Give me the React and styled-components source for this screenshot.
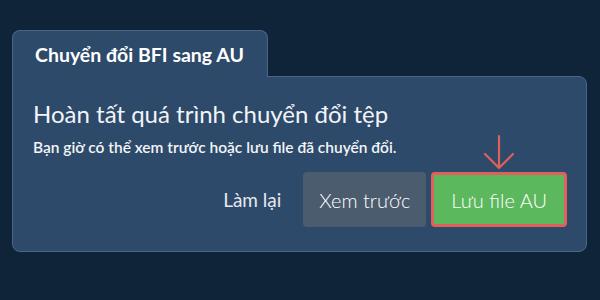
import React from "react";
import styled, { createGlobalStyle } from "styled-components";

const Global = createGlobalStyle`
  html, body { margin: 0; padding: 0; background: #0f2439; }
  body { font-family: Lato, "Noto Sans", sans-serif; color: #f2f4f7; }
`;

const Page = styled.div`
  width: 600px;
  height: 300px;
  box-sizing: border-box;
  padding: 30px 13px 0 12px;
  background: #0f2439;
`;

const Tab = styled.div`
  position: relative;
  z-index: 1;
  display: inline-block;
  box-sizing: border-box;
  width: 256px;
  height: 47px;
  margin-bottom: -1px;
  padding: 12px 0 0 22px;
  background: #2d4a6a;
  border: 1px solid #4b6586;
  border-bottom: none;
  border-radius: 8px 8px 0 0;
  font-size: 19.5px;
  font-weight: 700;
  color: #ffffff;
`;

const Panel = styled.div`
  box-sizing: border-box;
  height: 176px;
  padding: 21px 19px 0 20px;
  background: #2d4a6a;
  border: 1px solid #4b6586;
  border-radius: 0 8px 8px 8px;
`;

const Heading = styled.h1`
  margin: 0;
  font-size: 24px;
  font-weight: 400;
  line-height: 32px;
  color: #f2f4f7;
`;

const Sub = styled.p`
  margin: 7px 0 0;
  font-size: 15.5px;
  font-weight: 600;
  line-height: 20px;
  color: #f2f4f7;
`;

const Actions = styled.div`
  display: flex;
  justify-content: flex-end;
  align-items: center;
  gap: 5px;
  margin-top: 15px;
`;

const Button = styled.button`
  position: relative;
  box-sizing: border-box;
  height: 55px;
  padding: 0 ${(p) => p.$px}px;
  border-radius: 4px;
  font-family: Lato, "Noto Sans", sans-serif;
  cursor: pointer;
  border: ${(p) => (p.$variant === "primary" ? "3px solid #e0605b" : "none")};
  background: ${(p) =>
    p.$variant === "primary"
      ? "#5cb85c"
      : p.$variant === "secondary"
      ? "#4b5c6f"
      : "transparent"};
  margin-right: ${(p) => (p.$variant === "ghost" ? "17px" : "0")};
  color: ${(p) => (p.$variant === "ghost" ? "#e6e9ee" : "#ffffff")};
  font-size: ${(p) => (p.$variant === "ghost" ? "19px" : "20px")};
  font-weight: ${(p) => (p.$variant === "ghost" ? 400 : 300)};
`;

const Arrow = styled.svg`
  position: absolute;
  left: 50%;
  top: -40px;
  transform: translateX(-50%);
  overflow: visible;
`;

export default function App() {
  return (
    <>
      <Global />
      <Page>
        <Tab>Chuyển đổi BFI sang AU</Tab>
        <Panel>
          <Heading>Hoàn tất quá trình chuyển đổi tệp</Heading>
          <Sub>Bạn giờ có thể xem trước hoặc lưu file đã chuyển đổi.</Sub>
          <Actions>
            <Button $variant="ghost" $px={0}>Làm lại</Button>
            <Button $variant="secondary" $px={16}>Xem trước</Button>
            <Button $variant="primary" $px={17}>
              <Arrow width="30" height="34" viewBox="0 0 30 34">
                <path
                  d="M15 1 V33 M1 19 L15 33 L29 19"
                  fill="none"
                  stroke="#e0605b"
                  strokeWidth="2.2"
                  strokeLinecap="round"
                  strokeLinejoin="round"
                />
              </Arrow>
              Lưu file AU
            </Button>
          </Actions>
        </Panel>
      </Page>
    </>
  );
}
